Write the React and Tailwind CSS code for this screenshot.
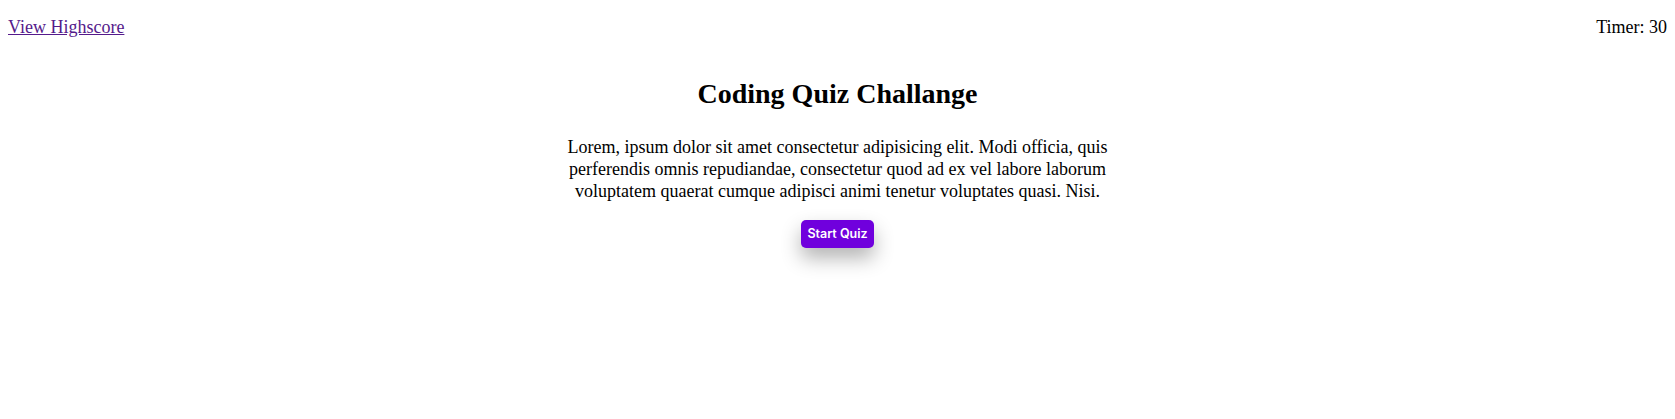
import React from 'react';

const serif = { fontFamily: '"Liberation Serif", "Times New Roman", serif' };

export default function App() {
  return (
    <div className="min-h-[419px] bg-white text-black" style={serif}>
      {/* Header */}
      <header className="flex items-center justify-between px-2 pt-[14px]">
        <a href="#" className="text-[18px] text-[#551a8b] underline">
          View Highscore
        </a>
        <span className="text-[18px]">Timer: 30</span>
      </header>

      {/* Intro */}
      <main className="mx-auto mt-[37px] flex max-w-[560px] flex-col items-center text-center">
        <h1 className="text-[28px] font-bold leading-[32px]">Coding Quiz Challange</h1>
        <p className="mt-[26px] text-[18px] leading-[22px]">
          Lorem, ipsum dolor sit amet consectetur adipisicing elit. Modi officia, quis
          perferendis omnis repudiandae, consectetur quod ad ex vel labore laborum
          voluptatem quaerat cumque adipisci animi tenetur voluptates quasi. Nisi.
        </p>
        <button
          className="mt-[18px] h-[28px] rounded-[5px] bg-[#7000dd] px-[6px] text-[12.5px] font-semibold text-white shadow-[0_10px_20px_rgba(0,0,0,0.3)]"
          style={{ fontFamily: 'Inter, "Liberation Sans", sans-serif' }}
        >
          Start Quiz
        </button>
      </main>
    </div>
  );
}
